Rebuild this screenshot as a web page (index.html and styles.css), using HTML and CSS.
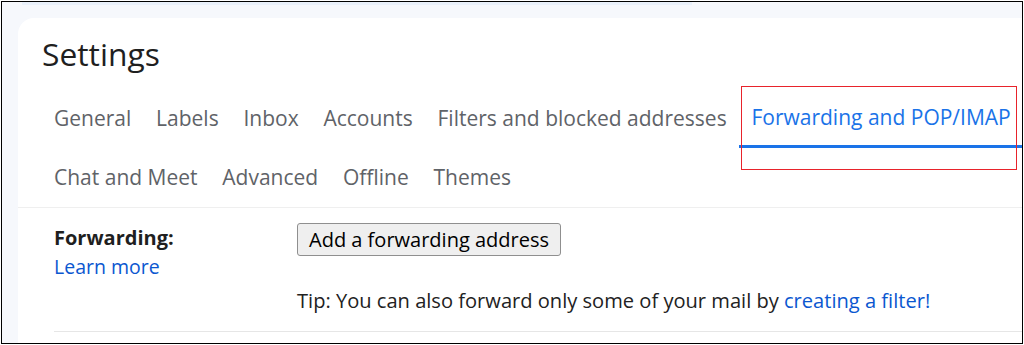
FILE: index.html
```html
<!DOCTYPE html>
<html>
<head>
<meta charset="utf-8">
<link rel="stylesheet" href="styles.css">
</head>
<body>
<div class="frame">
  <div class="topstrip"><div class="searchband"></div></div>
  <div class="card">
    <h1 class="title">Settings</h1>
    <nav class="tabs">
      <div class="tab-row">
        <span class="tab">General</span>
        <span class="tab">Labels</span>
        <span class="tab">Inbox</span>
        <span class="tab">Accounts</span>
        <span class="tab">Filters and blocked addresses</span>
        <span class="tab active">Forwarding and POP/IMAP</span>
      </div>
      <div class="tab-row">
        <span class="tab">Chat and Meet</span>
        <span class="tab">Advanced</span>
        <span class="tab">Offline</span>
        <span class="tab">Themes</span>
      </div>
      <div class="highlight"></div>
    </nav>
    <section class="setting">
      <div class="label-col">
        <div class="label">Forwarding:</div>
        <a class="link learn" href="#">Learn more</a>
      </div>
      <div class="value-col">
        <button class="btn">Add a forwarding address</button>
        <p class="tip">Tip: You can also forward only some of your mail by <a class="link" href="#">creating a filter!</a></p>
      </div>
    </section>
  </div>
</div>
</body>
</html>
```
FILE: styles.css
```css
html, body {
  margin: 0;
  padding: 0;
  background: #ffffff;
}
body {
  width: 1024px;
  height: 345px;
  overflow: hidden;
  font-family: "Open Sans", Roboto, "Liberation Sans", Arial, sans-serif;
}
.frame {
  box-sizing: border-box;
  margin: 1px;
  width: 1022px;
  height: 343px;
  border: 1px solid #000;
  background: #f6f8fc;
  display: flex;
  flex-direction: column;
  overflow: hidden;
}
.topstrip {
  height: 16px;
  flex: none;
}
.searchband {
  margin-left: 20px;
  width: 670px;
  height: 3px;
  background: #eaf1fb;
}
.card {
  flex: 1;
  margin-left: 16px;
  background: #fff;
  border-top-left-radius: 16px;
  position: relative;
}
.title {
  margin: 0;
  padding: 16px 0 0 24px;
  height: 71px;
  box-sizing: border-box;
  font-weight: 400;
  font-size: 31.8px;
  line-height: 40px;
  color: #1f1f1f;
}
.tabs {
  padding-left: 24px;
  border-bottom: 1px solid #efefef;
}
.tab-row {
  display: flex;
  height: 59px;
}
.tab {
  box-sizing: border-box;
  height: 59px;
  padding: 0 12.4px;
  line-height: 59px;
  font-size: 21px;
  color: #5f6368;
  white-space: nowrap;
}
.tab:first-child {
  padding-left: 12px;
}
.tab.active {
  color: #1a73e8;
  border-bottom: 3px solid #1a73e8;
  line-height: 56px;
  flex: 1;
}
.highlight {
  position: absolute;
  left: 723px;
  top: 68px;
  width: 274px;
  height: 82px;
  border: 1px solid #e8232b;
}
.setting {
  margin-left: 36px;
  display: flex;
  border-bottom: 1px solid #e6e6e6;
  padding: 15px 0 0;
  height: 108px;
}
.label-col {
  width: 243px;
  flex: none;
  padding-top: 3px;
}
.label {
  font-weight: 700;
  font-size: 20px;
  line-height: 24px;
  color: #1f1f1f;
}
.link {
  color: #0b57d0;
  text-decoration: none;
}
.learn {
  display: block;
  margin-top: 3px;
  font-size: 19.5px;
  line-height: 28px;
}
.btn {
  display: block;
  height: 33px;
  padding: 0 11px;
  font-family: "Open Sans", Roboto, sans-serif;
  font-size: 20px;
  color: #000;
  background: #efefef;
  border: 1px solid #8f8f8f;
  border-radius: 3px;
}
.tip {
  margin: 33px 0 0;
  font-size: 20.1px;
  line-height: 24px;
  color: #222;
}
```
